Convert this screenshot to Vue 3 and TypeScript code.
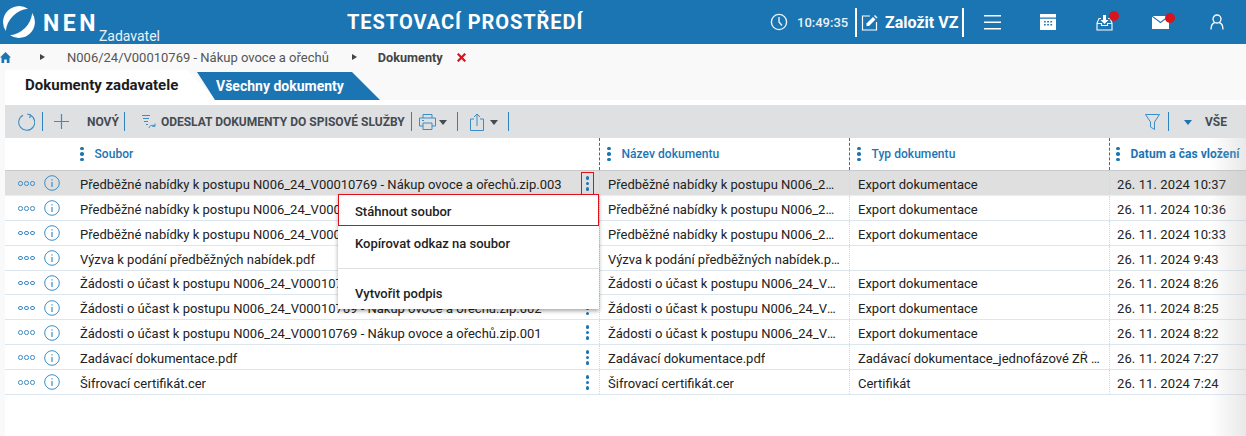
<script setup lang="ts">
interface Row { file: string; name: string; type: string; date: string }
const rows: Row[] = [
  { file: 'Předběžné nabídky k postupu N006_24_V00010769 - Nákup ovoce a ořechů.zip.003', name: 'Předběžné nabídky k postupu N006_24_V00010769 - Nákup ovoce a ořechů.zip.003', type: 'Export dokumentace', date: '26. 11. 2024 10:37' },
  { file: 'Předběžné nabídky k postupu N006_24_V00010769 - Nákup ovoce a ořechů.zip.002', name: 'Předběžné nabídky k postupu N006_24_V00010769 - Nákup ovoce a ořechů.zip.002', type: 'Export dokumentace', date: '26. 11. 2024 10:36' },
  { file: 'Předběžné nabídky k postupu N006_24_V00010769 - Nákup ovoce a ořechů.zip.001', name: 'Předběžné nabídky k postupu N006_24_V00010769 - Nákup ovoce a ořechů.zip.001', type: 'Export dokumentace', date: '26. 11. 2024 10:33' },
  { file: 'Výzva k podání předběžných nabídek.pdf', name: 'Výzva k podání předběžných nabídek.pdf', type: '', date: '26. 11. 2024 9:43' },
  { file: 'Žádosti o účast k postupu N006_24_V00010769 - Nákup ovoce a ořechů.zip.003', name: 'Žádosti o účast k postupu N006_24_V00010769 - Nákup ovoce a ořechů.zip.003', type: 'Export dokumentace', date: '26. 11. 2024 8:26' },
  { file: 'Žádosti o účast k postupu N006_24_V00010769 - Nákup ovoce a ořechů.zip.002', name: 'Žádosti o účast k postupu N006_24_V00010769 - Nákup ovoce a ořechů.zip.002', type: 'Export dokumentace', date: '26. 11. 2024 8:25' },
  { file: 'Žádosti o účast k postupu N006_24_V00010769 - Nákup ovoce a ořechů.zip.001', name: 'Žádosti o účast k postupu N006_24_V00010769 - Nákup ovoce a ořechů.zip.001', type: 'Export dokumentace', date: '26. 11. 2024 8:22' },
  { file: 'Zadávací dokumentace.pdf', name: 'Zadávací dokumentace.pdf', type: 'Zadávací dokumentace_jednofázové ZŘ a DNS', date: '26. 11. 2024 7:27' },
  { file: 'Šifrovací certifikát.cer', name: 'Šifrovací certifikát.cer', type: 'Certifikát', date: '26. 11. 2024 7:24' },
]
const heads = ['Soubor', 'Název dokumentu', 'Typ dokumentu', 'Datum a čas vložení']
</script>

<template>
  <div class="page">
    <header class="top">
      <div class="brand">
        <svg class="logo" width="34" height="34" viewBox="0 0 34 34" fill="#fff">
          <path d="M26 3.800A16 16 0 0 0 3.800 26 A25 25 0 0 1 26 3.800z"/>
          <path d="M30.200 8A16 16 0 0 1 8 30.200 A25 25 0 0 0 30.200 8z"/>
        </svg>
        <span class="nen">NEN</span>
        <span class="role">Zadavatel</span>
      </div>
      <div class="title">TESTOVACÍ PROSTŘEDÍ</div>
      <div class="tools">
        <svg class="clock" width="18" height="18" viewBox="0 0 18 18" fill="none" stroke="#e8f1f7" stroke-width="1.400"><circle cx="9" cy="9" r="7.600"/><path d="M9 4v5l3 3.500"/></svg>
        <span class="time">10:49:35</span>
        <div class="found">
          <svg width="17" height="17" viewBox="0 0 17 17" fill="none" stroke="#fff" stroke-width="1.200"><path d="M9 2H1.500v14h14V8"/><path d="M5.500 9.500 12 3l2.500 2.500L8 12H5.500z" fill="#fff" stroke="none"/><path d="M13 2l1-1 2.500 2.500-1 1z" fill="#fff" stroke="none"/></svg>
          <span>Založit VZ</span>
        </div>
        <svg class="ic-menu" width="17" height="15" viewBox="0 0 17 15" fill="#fff"><rect y="0" width="17" height="1.500"/><rect y="6.500" width="17" height="1.500"/><rect y="13" width="17" height="1.500"/></svg>
        <svg class="ic-cal" width="16" height="16" viewBox="0 0 16 16" fill="#fff"><path fill-rule="evenodd" d="M0 0h16v16H0zM0 3.500v1.200h16V3.500zM4 7v1.500h1.700V7zm3.200 0v1.500h1.700V7zm3.200 0v1.500h1.700V7zM4 10v1.500h1.700V10zm3.200 0v1.500h1.700V10zm3.200 0v1.500h1.700V10z"/></svg>
        <div class="badged ic-inbox">
          <svg width="17" height="17" viewBox="0 0 17 17" fill="none" stroke="#fff" stroke-width="1.100"><path d="M5 4.500H3L1 9v7h15V9l-2-4.500h-2"/><path d="M1 9.500h4.500v2h6v-2H16"/><path d="M7 1h3v5h2.500l-4 4-4-4H7z" fill="#fff" stroke="none"/></svg>
          <i class="dot"></i>
        </div>
        <div class="badged ic-mail">
          <svg width="17" height="13" viewBox="0 0 17 13"><path d="M0 .8l8.500 6.400L17 .8V13H0z" fill="#fff"/><path d="M.8 0h15.400L8.500 5.800z" fill="#fff"/></svg>
          <i class="dot"></i>
        </div>
        <svg class="ic-user" width="14" height="16" viewBox="0 0 14 16" fill="none" stroke="#fff" stroke-width="1.300"><circle cx="7" cy="5" r="4"/><path d="M1 15.500c0-4 2-6.500 4-7M13 15.500c0-4-2-6.500-4-7"/></svg>
      </div>
    </header>

    <nav class="crumbs">
      <svg class="home" width="11" height="11" viewBox="0 0 11 11" fill="#1c75b3"><path d="M5.500 0 11 5.500H9.500V11H6.800V7.500H4.200V11H1.500V5.500H0z"/></svg>
      <i class="arrow a1"></i>
      <span class="c-link">N006/24/V00010769 - Nákup ovoce a ořechů</span>
      <i class="arrow a2"></i>
      <b>Dokumenty</b>
      <svg class="close" width="9" height="9" viewBox="0 0 9 9" stroke="#e0101a" stroke-width="2.200"><path d="M.7.700l7.600 7.600M8.300.700.7 8.300"/></svg>
    </nav>

    <div class="tabs">
      <div class="tab-on">Dokumenty zadavatele</div>
      <div class="tab-off">Všechny dokumenty</div>
    </div>

    <main class="panel">
      <div class="toolbar">
        <svg class="t-reload" width="18" height="18" viewBox="0 0 18 18" fill="none" stroke="#3a8dc5" stroke-width="1.100"><path d="M6 2.200A8 8 0 1 0 13 2"/><path d="M10.200 1l3.300.9-.8 3.300"/></svg>
        <i class="sep"></i>
        <svg class="t-plus" width="15" height="15" viewBox="0 0 15 15" stroke="#3a8dc5" stroke-width="1.200"><path d="M7.500 0v15M0 7.500h15"/></svg>
        <span class="t-text t-new">NOVÝ</span>
        <i class="sep"></i>
        <svg class="t-send" width="15" height="15" viewBox="0 0 15 15" fill="none" stroke="#3a8dc5" stroke-width="1"><path d="M0 1.500h8M1 4.500h6M2 7.500h4M4 10.500h2M7 14c.5-2.500 3.500-3.500 6-2M13 9.500v2.800h-2.800"/></svg>
        <span class="t-text">ODESLAT DOKUMENTY DO SPISOVÉ SLUŽBY</span>
        <i class="sep s-send"></i>
        <svg class="t-print" width="17" height="16" viewBox="0 0 17 16" fill="none" stroke="#3a8dc5" stroke-width="1"><path d="M4 4V.5h9V4M4 12H.5V4h16v8H13M4 9h9v6.500H4z"/><path d="M3 6.500h2"/></svg>
        <i class="caret"></i>
        <i class="sep"></i>
        <svg class="t-share" width="14" height="18" viewBox="0 0 14 18" fill="none" stroke="#3a8dc5" stroke-width="1"><path d="M4 6H.5v11.500h13V6H10M7 13V1M4 4l3-3 3 3"/></svg>
        <i class="caret"></i>
        <i class="sep"></i>
        <div class="grow"></div>
        <svg class="t-filter" width="15" height="16" viewBox="0 0 15 16" fill="none" stroke="#3a8dc5" stroke-width="1"><path d="M.5.500h14L9.500 8v7.500l-4-2.500V8z"/></svg>
        <i class="sep s-f"></i>
        <i class="caret blue"></i>
        <span class="t-text t-all">VŠE</span>
      </div>

      <div class="grid">
        <div class="head">
          <div v-for="(h, i) in heads" :key="h" class="hcell" :class="'c' + i">
            <span class="dots"><i></i><i></i><i></i></span>
            <span class="htext">{{ h }}</span>
          </div>
        </div>
        <div v-for="(r, i) in rows" :key="i" class="row" :class="{ sel: i === 0 }">
          <div class="cell c0">
            <span class="more"><i></i><i></i><i></i></span>
            <svg class="info" width="16" height="16" viewBox="0 0 16 16" fill="none" stroke="#3a8dc5"><circle cx="8" cy="8" r="7.300"/><path d="M8 7v5M8 4.200v1.300" stroke-width="1.200"/></svg>
            <span class="txt file">{{ r.file }}</span>
            <span class="kebab" :class="{ boxed: i === 0 }"><i></i><i></i><i></i></span>
          </div>
          <div class="cell c1"><span class="txt">{{ r.name }}</span></div>
          <div class="cell c2"><span class="txt">{{ r.type }}</span></div>
          <div class="cell c3"><span class="txt date">{{ r.date }}</span></div>
        </div>
      </div>

      <div class="menu">
        <div class="m-item m-active">Stáhnout soubor</div>
        <div class="m-item m-copy">Kopírovat odkaz na soubor</div>
        <div class="m-item m-sign">Vytvořit podpis</div>
      </div>
      <div class="fade"></div>
    </main>
  </div>
</template>

<style>
html, body { margin: 0; background: #f9f9f9; }
</style>

<style scoped>
.page { width: 1246px; height: 436px; overflow: hidden; font-family: Roboto, "Liberation Sans", sans-serif; background: #f9f9f9; color: #222; position: relative; }
.top { height: 44px; background: #1c75b3; display: flex; align-items: center; color: #fff; position: relative; }
.brand { display: flex; width: 347px; align-items: center; padding-left: 2px; box-sizing: border-box; height: 44px; }
.logo { flex: none; }
.nen { font-weight: 700; font-size: 23px; letter-spacing: 3.500px; margin-left: 7px; margin-top: 2px; }
.role { font-size: 14px; align-self: flex-end; margin: 0; color: #e8f1f7; }
.title { font-weight: 700; font-size: 20px; letter-spacing: .95px; white-space: nowrap; width: 423px; }
.tools { display: flex; align-items: center; height: 44px; }
.clock { margin-right: 9px; }
.time { font-size: 13px; font-weight: 500; color: #e8f1f7; width: 58px; }
.found { display: flex; align-items: center; height: 29px; width: 109px; box-sizing: border-box; border-left: 2px solid #fff; border-right: 2px solid #fff; padding-left: 4px; margin-right: 20px; font-weight: 700; font-size: 16px; gap: 7px; }
.ic-menu { margin-right: 39px; }
.ic-cal { margin-right: 40px; }
.badged { position: relative; display: flex; }
.ic-inbox { margin-right: 39px; }
.ic-mail { margin-right: 41px; }
.dot { position: absolute; width: 10px; height: 10px; border-radius: 50%; background: #d8141c; right: -6px; top: -3px; }
.crumbs { height: 26px; display: flex; align-items: center; font-size: 13px; color: #555; position: relative; }
.arrow { width: 0; height: 0; border-left: 5px solid #444; border-top: 3.500px solid transparent; border-bottom: 3.500px solid transparent; }
.a1 { margin-left: 29px; margin-right: 22px; }
.a2 { margin-left: 23px; margin-right: 21px; }
.crumbs b { color: #444; font-weight: 700; font-size: 12.700px; }
.close { margin-left: 14px; }
.tabs { height: 30px; display: flex; padding-left: 5px; position: relative; }
.tab-on { width: 211px; height: 30px; background: #fff; font-weight: 700; font-size: 15px; color: #1c1c1c; padding: 6px 0 0 20px; box-sizing: border-box; clip-path: polygon(0 0, 182px 0, 211px 30px, 0 30px); }
.tab-off { width: 183px; height: 28px; margin: 2px 0 0 -19px; background: #1c75b3; color: #fff; font-weight: 700; font-size: 14px; padding: 6px 0 0 19px; box-sizing: border-box; clip-path: polygon(0 0, 155px 0, 183px 28px, 18px 28px); }
.panel { position: relative; margin-left: 5px; height: 336px; background: #fff; padding-top: 5px; box-sizing: border-box; }
.toolbar { height: 33px; background: #dfe0e2; display: flex; align-items: center; padding-right: 19px; box-sizing: border-box; }
.sep { width: 1px; height: 19px; background: #2d83bd; flex: none; }
.t-reload { margin: 0 7px 0 12px; }
.t-plus { margin: 0 18px 0 11px; }
.t-new { margin-right: 3px; }
.t-send { margin: 0 4px 0 17px; }
.t-text { font-size: 12px; font-weight: 700; color: #454b52; white-space: nowrap; }
.t-text + .sep { margin-left: 2px; }
.t-text + .sep.s-send { margin-left: 6px; }
.t-print { margin: 0 3px 0 7px; }
.t-share { margin: 0 6px 0 12px; }
.caret { width: 0; height: 0; border-top: 5px solid #454b52; border-left: 4px solid transparent; border-right: 4px solid transparent; margin-right: 4px; margin-top: 2px; flex: none; }
.caret + .sep { margin-left: 6px; }
.caret.blue { border-top-color: #1c75b3; margin-right: 13px; }
.s-f { margin: 0 15px 0 8px; }
.grow { flex: 1; }
.grid { position: relative; }
.head { display: flex; height: 33px; border-bottom: 1px solid #c9c9c9; box-sizing: border-box; }
.hcell, .cell { display: flex; align-items: center; box-sizing: border-box; flex: none; white-space: nowrap; overflow: hidden; }
.c0 { width: 594px; }
.c1 { width: 250px; }
.c2 { width: 260px; }
.c3 { width: 137px; }
.hcell.c1, .hcell.c2, .hcell.c3 { border-left: 1px dashed #1c75b3; }
.hcell { padding-left: 7px; font-size: 12px; font-weight: 500; color: #1c75b3; gap: 11px; }
.hcell.c0 { padding-left: 75px; }
.hcell.c3 { font-weight: 700; padding-left: 6px; }
.htext { letter-spacing: .05px; }
.dots { display: flex; flex-direction: column; gap: 2px; }
.dots i, .kebab i { width: 3.500px; height: 3.500px; border-radius: 50%; background: #1c75b3; display: block; }
.row { display: flex; height: 24.890px; box-sizing: border-box; border-bottom: 1px solid #dce6ee; }
.row.sel { background: #dfdfdf; border-bottom-color: #e9eef2; }
.cell { font-size: 13px; position: relative; padding-top: 1px; }
.cell.c1, .cell.c2 { border-left: 1px dotted #d6d6d6; padding-left: 8px; }
.cell.c3 { border-left: 1px dotted #d6d6d6; padding-left: 7px; }
.txt { color: #222; overflow: hidden; text-overflow: ellipsis; padding-top: 2px; }
.date { letter-spacing: .1px; }
.c1 .txt { max-width: 233px; }
.c2 .txt { max-width: 244px; }
.more { display: flex; gap: 1.500px; margin-left: 13px; flex: none; }
.more i { width: 4.500px; height: 4.500px; border: 1px solid #3a8dc5; border-radius: 50%; box-sizing: border-box; display: block; }
.info { margin-left: 9px; flex: none; }
.file { margin-left: 20.500px; width: 501px; flex: none; }
.kebab { display: flex; flex-direction: column; align-items: center; justify-content: center; gap: 2px; width: 13px; height: 23px; flex: none; box-sizing: border-box; border: 1px solid transparent; }
.kebab.boxed { border-color: #e0101a; }
.menu { position: absolute; left: 333px; top: 94px; width: 261px; height: 115px; background: #fff; box-shadow: 0 2px 4px rgba(0,0,0,.35); font-size: 13px; font-weight: 500; color: #222; }
.m-item { box-sizing: border-box; padding-left: 17px; display: flex; align-items: center; }
.m-active { height: 32px; border: 1px solid #e0101a; padding-left: 16px; padding-top: 3px; }
.m-copy { height: 43px; align-items: flex-start; padding-top: 10px; border-bottom: 1px solid #e0e0e0; }
.m-sign { height: 40px; padding-top: 9px; }
.fade { position: absolute; right: 0; top: 38px; bottom: 0; width: 36px; background: linear-gradient(to right, rgba(200,200,200,0), rgba(190,190,190,.35)); pointer-events: none; }
</style>
